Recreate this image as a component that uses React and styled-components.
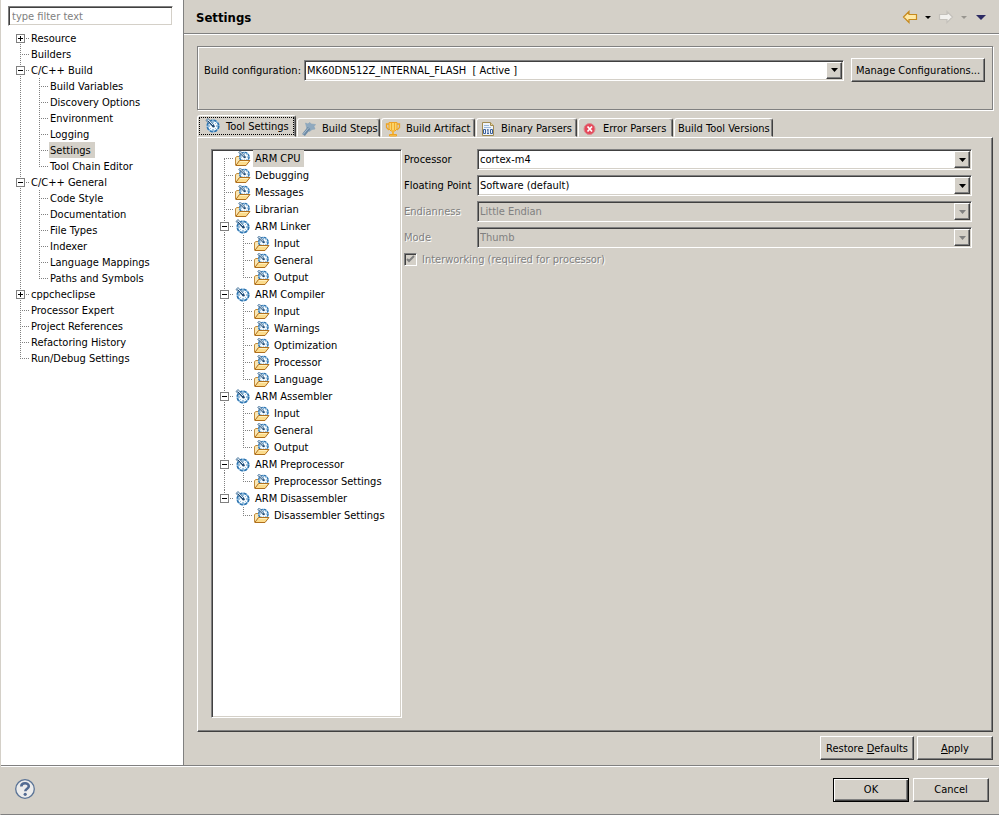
import React, { useState } from "react";
import styled, { createGlobalStyle, css } from "styled-components";

const GlobalStyle = createGlobalStyle`
  * {
    box-sizing: border-box;
  }
  body {
    margin: 0;
    background-color: #d4d0c8;
  }
  body, button, input, select {
    font-family: "DejaVu Sans Condensed", "DejaVu Sans", sans-serif;
    font-size: 11px;
    color: #000;
  }
`;

const raised = css`
  border: 1px solid;
  border-color: #fff #404040 #404040 #fff;
  box-shadow: inset -1px -1px 0 #808080;
`;

const sunken = css`
  border: 1px solid;
  border-color: #808080 #fff #fff #808080;
  box-shadow: inset 1px 1px 0 #404040, inset -1px -1px 0 #d4d0c8;
`;

const Dialog = styled.div`
  display: flex;
  flex-direction: column;
  min-height: 100vh;
  border-left: 1px solid #d4d0c8;
  border-bottom: 1px solid #808080;
  background-color: #d4d0c8;
`;

const Main = styled.div`
  display: flex;
  flex: 1;
  border-bottom: 1px solid #808080;
`;

const Sidebar = styled.nav`
  width: 183px;
  padding-top: 6px;
  background-color: #fff;
  border-right: 1px solid #808080;
`;

const Filter = styled.input`
  ${sunken}
  display: block;
  width: 165px;
  height: 20px;
  margin: 0 0 4px 7px;
  padding: 0 3px;
  border-radius: 0;
  background-color: #fff;
  outline: none;
  &::placeholder {
    color: #808080;
    opacity: 1;
  }
`;

const Content = styled.main`
  display: flex;
  flex-direction: column;
  flex: 1;
  min-width: 0;
`;

const Header = styled.header`
  display: flex;
  align-items: center;
  justify-content: space-between;
  height: 35px;
  padding: 0 10px 0 12px;
  border-bottom: 1px solid #fff;
  box-shadow: inset 0 -1px 0 #808080;
`;

const Title = styled.h1`
  margin: 0;
  font-size: 13px;
  font-weight: bold;
`;

const Tools = styled.div`
  display: flex;
  align-items: center;
`;

const ToolButton = styled.button`
  display: flex;
  justify-content: center;
  width: ${({ $width }) => $width}px;
  padding: 0;
  border: none;
  background: none;
`;

const Body = styled.div`
  display: flex;
  flex-direction: column;
  flex: 1;
  padding: 11px 6px 5px 13px;
`;

const Group = styled.div`
  display: flex;
  align-items: center;
  gap: 7px;
  margin-bottom: 5px;
  padding: 11px 7px 27px 6px;
  border: 1px solid #808080;
  box-shadow: inset 1px 1px 0 #fff, 1px 1px 0 #fff;
`;

const GroupLabel = styled.label`
  width: 93px;
  white-space: nowrap;
`;

const ComboBox = styled.div`
  ${sunken}
  position: relative;
  flex: 1;
  height: 21px;
  padding: 1px;
  background-color: ${({ $disabled }) => ($disabled ? "#d4d0c8" : "#fff")};
`;

const Select = styled.select`
  appearance: none;
  display: block;
  width: 100%;
  height: 17px;
  padding: 0 18px 0 1px;
  border: none;
  border-radius: 0;
  background: transparent;
  outline: none;
  &:disabled {
    color: #808080;
    opacity: 1;
  }
`;

const ComboArrow = styled.span`
  ${raised}
  position: absolute;
  top: 1px;
  right: 1px;
  display: flex;
  align-items: center;
  justify-content: center;
  width: 16px;
  height: 17px;
  background-color: #d4d0c8;
  pointer-events: none;
`;

const Button = styled.button`
  ${raised}
  width: ${({ $width }) => $width}px;
  height: 24px;
  padding: 0;
  border-radius: 0;
  background-color: #d4d0c8;
  white-space: nowrap;
  ${({ $primary }) =>
    $primary &&
    css`
      border-color: #000;
      box-shadow: inset 1px 1px 0 #fff, inset -1px -1px 0 #404040, inset -2px -2px 0 #808080;
    `}
`;

const TabBar = styled.div`
  display: flex;
  align-items: flex-end;
  height: 22px;
`;

const Tab = styled.button`
  display: flex;
  align-items: center;
  gap: 5px;
  width: ${({ $width }) => $width}px;
  height: 19px;
  margin-right: 1px;
  padding: 2px 0 0 3px;
  border: 1px solid;
  border-color: #fff #404040 transparent #fff;
  border-radius: 3px 3px 0 0;
  box-shadow: inset -1px 0 0 #808080;
  background-color: #d4d0c8;
  white-space: nowrap;
  ${({ $active }) =>
    $active &&
    css`
      height: 22px;
      padding: 0 0 0 7px;
      outline: 1px dotted #000;
      outline-offset: -3px;
    `}
`;

const Pane = styled.div`
  ${raised}
  display: flex;
  flex: 1;
  gap: 2px;
  margin-bottom: 4px;
  padding: 11px 20px 13px 13px;
`;

const ToolTree = styled.div`
  ${sunken}
  width: 191px;
  padding: 0 0 0 3px;
  background-color: #fff;
`;

const TreeList = styled.ul`
  margin: 0;
  padding: 0 0 0 ${({ $indent }) => $indent}px;
  list-style: none;
`;

const TreeRow = styled.li`
  display: flex;
  align-items: stretch;
  height: ${({ $height }) => $height}px;
`;

const dotsDown = "repeating-linear-gradient(to bottom, #808080 0 1px, transparent 1px 2px)";
const dotsRight = "repeating-linear-gradient(to right, #808080 0 1px, transparent 1px 2px)";

const guides = {
  none: "none",
  line: `${dotsDown} 9px 0 / 1px 100% no-repeat`,
  tee: `${dotsDown} 9px 0 / 1px 100% no-repeat, ${dotsRight} 9px 50% / 10px 1px no-repeat`,
  end: `${dotsDown} 9px 0 / 1px 50% no-repeat, ${dotsRight} 9px 50% / 10px 1px no-repeat`,
  first: `${dotsDown} 9px 100% / 1px 50% no-repeat, ${dotsRight} 9px 50% / 10px 1px no-repeat`,
};

const Guide = styled.span`
  display: flex;
  align-items: center;
  justify-content: center;
  width: 19px;
  background: ${({ $kind }) => guides[$kind]};
`;

const Expander = styled.button`
  display: flex;
  width: 9px;
  height: 9px;
  padding: 0;
  border: 1px solid #808080;
  background-color: #fff;
`;

const TreeIcon = styled.span`
  display: flex;
  align-items: center;
  width: 19px;
  padding-left: 1px;
`;

const TreeLabel = styled.button`
  padding: 0 4px 0 ${({ $inset }) => $inset}px;
  border: none;
  background-color: ${({ $active }) => ($active ? "#d4d0c8" : "transparent")};
  white-space: nowrap;
`;

const Form = styled.form`
  display: flex;
  flex-direction: column;
  flex: 1;
  gap: 5px;
`;

const Field = styled.div`
  display: flex;
  align-items: center;
`;

const disabledText = css`
  color: #808080;
  text-shadow: 1px 1px 0 #fff;
`;

const FieldLabel = styled.label`
  width: 73px;
  white-space: nowrap;
  ${({ $disabled }) => $disabled && disabledText}
`;

const CheckLabel = styled.label`
  ${disabledText}
  display: flex;
  align-items: center;
  gap: 5px;
`;

const Checkbox = styled.input`
  ${sunken}
  appearance: none;
  width: 13px;
  height: 13px;
  margin: 0;
  background: #d4d0c8;
  &:checked {
    background: #d4d0c8
      url("data:image/svg+xml,%3Csvg xmlns='http://www.w3.org/2000/svg' viewBox='0 0 11 11'%3E%3Cpath d='M2 5l2 2 5-5' fill='none' stroke='%23808080' stroke-width='2'/%3E%3C/svg%3E")
      center / 11px no-repeat;
  }
`;

const Actions = styled.div`
  display: flex;
  justify-content: flex-end;
  gap: 3px;
`;

const Footer = styled.footer`
  display: flex;
  align-items: center;
  gap: 4px;
  height: 48px;
  padding: 0 10px 2px 13px;
  border-top: 1px solid #fff;
`;

const HelpButton = styled.button`
  display: flex;
  margin-right: auto;
  padding: 0;
  border: none;
  background: none;
`;

const Wheel = () => (
  <>
    <circle cx="8" cy="8" r="5.7" fill="#f7fbfe" stroke="#8cbce2" strokeWidth="1.6" />
    <circle
      cx="8"
      cy="8"
      r="5.7"
      fill="none"
      stroke="#2f74ae"
      strokeWidth="1.6"
      strokeDasharray="2.9 1.577"
    />
    <path
      d="M8 3v2M8 11v2M11 8h2M3 8h2M11.500 4.500l-1 1M4.500 11.500l1-1M11.500 11.500l-1-1"
      stroke="#4388bd"
    />
    <path d="M1 2.500L3 0.500l6 6.500-1.500 1.500z" fill="#dcebf6" stroke="#2a5b88" strokeWidth="0.8" />
    <path d="M2.500 2.500l6 6" stroke="#1d4670" />
    <circle cx="8.5" cy="8.3" r="1.2" fill="#1f4770" />
  </>
);

const WheelIcon = () => (
  <svg width="16" height="16" viewBox="0 0 16 16">
    <Wheel />
  </svg>
);

const FolderIcon = () => (
  <svg width="16" height="16" viewBox="0 0 16 16">
    <path d="M0.500 14V6.500L2 5.500h2l1 1.500h7.500v3" fill="#fae7b4" stroke="#c08a3c" />
    <g transform="translate(2.800 -0.500) scale(0.820)">
      <Wheel />
    </g>
    <path d="M0.800 14.500L4.500 9.500H15L11 14.500z" fill="#fcdc8c" stroke="#b06f1c" />
    <path d="M5 10.500h8" stroke="#fff0bf" />
  </svg>
);

const StepsIcon = () => (
  <svg width="16" height="16" viewBox="0 0 16 16">
    <path
      d="M4.500 2l2.500 1 1.500-1.500 2 1.500 4 .5-1.500 2 1 2.500-3 .5-2.500 2-2-1-1-3.500z"
      fill="#8fa9bf"
      stroke="#88a2b9"
      strokeWidth="0.600"
    />
    <path d="M8 7L2.500 14" stroke="#6d8aa5" strokeWidth="3.500" />
    <path d="M7.500 7L2 13.500" stroke="#a9bfd0" />
  </svg>
);

const TrophyIcon = () => (
  <svg width="16" height="16" viewBox="0 0 16 16">
    <path d="M4 3H1.500v3.500L4 9M12 3h2.500v3.500L12 9" fill="none" stroke="#eda224" strokeWidth="1.300" />
    <path d="M4 1.500h8V8l-2 2H6L4 8z" fill="#fcd467" stroke="#eda224" />
    <path d="M6.500 2v7M9.500 2v7" stroke="#efa92d" />
    <path d="M7 10h2v3H7z" fill="#f4b539" />
    <path d="M4.500 13.500h7v1.500h-7z" fill="#fcd467" stroke="#eda224" />
  </svg>
);

const BinaryIcon = () => (
  <svg width="16" height="16" viewBox="0 0 16 16">
    <path d="M2.500 1.500h8l3 3v10h-11z" fill="#eef4fb" stroke="#a08a52" />
    <path d="M10.500 1.500v3h3" fill="#e7d49b" stroke="#a08a52" />
    <path d="M4 4.500h5M4 6.500h7" stroke="#9bb9dc" />
    <path d="M3.500 8.500h2v4h-2zM10.500 8.500h2v4h-2zM8 8v5M7 9h1M7 12.500h2" fill="none" stroke="#3a5f9a" />
  </svg>
);

const ErrorIcon = () => (
  <svg width="16" height="16" viewBox="0 0 16 16">
    <circle cx="7.500" cy="8" r="5.500" fill="#e5485a" stroke="#d98a8e" />
    <path d="M5.500 5.500l4.500 5M10 5.500l-4.500 5" stroke="#fff" strokeWidth="1.700" />
  </svg>
);

const HelpIcon = () => (
  <svg width="22" height="22" viewBox="0 0 22 22">
    <circle cx="11" cy="10" r="9.300" fill="#ececec" stroke="#5a7396" strokeWidth="1.300" />
    <path
      d="M7.300 7.500c0-4.300 7.500-4.300 7.500-.2 0 2.500-3.500 2.400-3.500 5"
      fill="none"
      stroke="#526a92"
      strokeWidth="2.600"
    />
    <circle cx="11.200" cy="15.300" r="1.600" fill="#526a92" />
  </svg>
);

const Triangle = ({ color = "#000", width = 7, height = 4 }) => (
  <svg width={width} height={height} viewBox="0 0 7 4" preserveAspectRatio="none">
    <path d="M0 0h7L3.500 4z" fill={color} />
  </svg>
);

const Arrow = ({ fill, stroke, flip }) => (
  <svg width="16" height="14" viewBox="0 0 16 14">
    <path
      d="M1.500 7L7 1.500V4.500h7.500v5H7v3z"
      fill={fill}
      stroke={stroke}
      strokeWidth="1.200"
      transform={flip ? "matrix(-1 0 0 1 16 0)" : undefined}
    />
  </svg>
);

const pages = [
  { name: "Resource", closed: true, children: [] },
  { name: "Builders" },
  {
    name: "C/C++ Build",
    children: [
      { name: "Build Variables" },
      { name: "Discovery Options" },
      { name: "Environment" },
      { name: "Logging" },
      { name: "Settings" },
      { name: "Tool Chain Editor" },
    ],
  },
  {
    name: "C/C++ General",
    children: [
      { name: "Code Style" },
      { name: "Documentation" },
      { name: "File Types" },
      { name: "Indexer" },
      { name: "Language Mappings" },
      { name: "Paths and Symbols" },
    ],
  },
  { name: "cppcheclipse", closed: true, children: [] },
  { name: "Processor Expert" },
  { name: "Project References" },
  { name: "Refactoring History" },
  { name: "Run/Debug Settings" },
];

const tools = [
  { name: "ARM CPU" },
  { name: "Debugging" },
  { name: "Messages" },
  { name: "Librarian" },
  { name: "ARM Linker", children: [{ name: "Input" }, { name: "General" }, { name: "Output" }] },
  {
    name: "ARM Compiler",
    children: [
      { name: "Input" },
      { name: "Warnings" },
      { name: "Optimization" },
      { name: "Processor" },
      { name: "Language" },
    ],
  },
  { name: "ARM Assembler", children: [{ name: "Input" }, { name: "General" }, { name: "Output" }] },
  { name: "ARM Preprocessor", children: [{ name: "Preprocessor Settings" }] },
  { name: "ARM Disassembler", children: [{ name: "Disassembler Settings" }] },
];

const tabs = [
  { name: "Tool Settings", icon: <WheelIcon />, width: 99 },
  { name: "Build Steps", icon: <StepsIcon />, width: 83 },
  { name: "Build Artifact", icon: <TrophyIcon />, width: 94 },
  { name: "Binary Parsers", icon: <BinaryIcon />, width: 101 },
  { name: "Error Parsers", icon: <ErrorIcon />, width: 95 },
  { name: "Build Tool Versions", width: 99 },
];

const Tree = ({ items, initial, rowHeight, indent, icons }) => {
  const [selected, setSelected] = useState(initial);
  const [closed, setClosed] = useState(items.filter((i) => i.closed).map((i) => i.name));

  const toggle = (name) =>
    setClosed(closed.includes(name) ? closed.filter((n) => n !== name) : [...closed, name]);

  const rows = [];
  items.forEach((item, i) => {
    const last = i === items.length - 1;
    const open = item.children && !closed.includes(item.name);
    rows.push({ ...item, id: item.name, open, kinds: [i === 0 ? "first" : last ? "end" : "tee"] });
    if (open) {
      item.children.forEach((child, j) => {
        rows.push({
          ...child,
          id: item.name + "/" + child.name,
          kinds: [last ? "none" : "line", j === item.children.length - 1 ? "end" : "tee"],
        });
      });
    }
  });

  return (
    <TreeList $indent={indent}>
      {rows.map((row) => (
        <TreeRow key={row.id} $height={rowHeight}>
          {row.kinds.map((kind, i) => (
            <Guide key={i} $kind={kind}>
              {row.children && (
                <Expander aria-label={"Toggle " + row.name} onClick={() => toggle(row.name)}>
                  <svg width="7" height="7" viewBox="0 0 7 7">
                    <path d={row.open ? "M1 3.500h5" : "M1 3.500h5M3.500 1v5"} stroke="#000" />
                  </svg>
                </Expander>
              )}
            </Guide>
          ))}
          {icons && <TreeIcon>{row.children ? <WheelIcon /> : <FolderIcon />}</TreeIcon>}
          <TreeLabel
            $inset={icons ? 2 : 1}
            $active={selected === row.id}
            onClick={() => setSelected(row.id)}
          >
            {row.name}
          </TreeLabel>
        </TreeRow>
      ))}
    </TreeList>
  );
};

const Combo = ({ id, value, disabled }) => (
  <ComboBox $disabled={disabled}>
    <Select id={id} disabled={disabled} defaultValue={value}>
      <option value={value}>{value}</option>
    </Select>
    <ComboArrow>
      <Triangle color={disabled ? "#808080" : "#000"} />
    </ComboArrow>
  </ComboBox>
);

const Setting = ({ id, label, value, disabled }) => (
  <Field>
    <FieldLabel htmlFor={id} $disabled={disabled}>
      {label}
    </FieldLabel>
    <Combo id={id} value={value} disabled={disabled} />
  </Field>
);

const App = () => {
  const [tab, setTab] = useState("Tool Settings");

  return (
    <>
      <GlobalStyle />
      <Dialog>
        <Main>
          <Sidebar>
            <Filter placeholder="type filter text" aria-label="Filter" />
            <Tree items={pages} initial="C/C++ Build/Settings" rowHeight={16} indent={10} />
          </Sidebar>
          <Content>
            <Header>
              <Title>Settings</Title>
              <Tools>
                <ToolButton $width={18} aria-label="Back">
                  <Arrow fill="#ffe9a6" stroke="#c68a1e" />
                </ToolButton>
                <ToolButton $width={18} aria-label="Back history">
                  <Triangle width={6} height={3} />
                </ToolButton>
                <ToolButton $width={18} aria-label="Forward">
                  <Arrow fill="#f2f1ee" stroke="#c4c1bb" flip />
                </ToolButton>
                <ToolButton $width={18} aria-label="Forward history">
                  <Triangle color="#98958f" width={6} height={3} />
                </ToolButton>
                <ToolButton $width={16} aria-label="Menu">
                  <Triangle color="#2c2a63" width={10} height={5} />
                </ToolButton>
              </Tools>
            </Header>
            <Body>
              <Group>
                <GroupLabel htmlFor="config">Build configuration:</GroupLabel>
                <Combo id="config" value={"MK60DN512Z_INTERNAL_FLASH\u00a0 [ Active ]"} />
                <Button $width={134}>Manage Configurations...</Button>
              </Group>
              <TabBar role="tablist">
                {tabs.map(({ name, icon, width }) => (
                  <Tab
                    key={name}
                    role="tab"
                    aria-selected={tab === name}
                    $active={tab === name}
                    $width={width}
                    onClick={() => setTab(name)}
                  >
                    {icon}
                    {name}
                  </Tab>
                ))}
              </TabBar>
              <Pane>
                <ToolTree>
                  <Tree items={tools} initial="ARM CPU" rowHeight={17} indent={0} icons />
                </ToolTree>
                <Form>
                  <Setting id="processor" label="Processor" value="cortex-m4" />
                  <Setting id="float" label="Floating Point" value="Software (default)" />
                  <Setting id="endian" label="Endianness" value="Little Endian" disabled />
                  <Setting id="mode" label="Mode" value="Thumb" disabled />
                  <CheckLabel>
                    <Checkbox type="checkbox" defaultChecked disabled />
                    Interworking (required for processor)
                  </CheckLabel>
                </Form>
              </Pane>
              <Actions>
                <Button $width={94}>
                  Restore <u>D</u>efaults
                </Button>
                <Button $width={76}>
                  <u>A</u>pply
                </Button>
              </Actions>
            </Body>
          </Content>
        </Main>
        <Footer>
          <HelpButton aria-label="Help">
            <HelpIcon />
          </HelpButton>
          <Button $width={76} $primary>
            OK
          </Button>
          <Button $width={76}>Cancel</Button>
        </Footer>
      </Dialog>
    </>
  );
};

export default App;
